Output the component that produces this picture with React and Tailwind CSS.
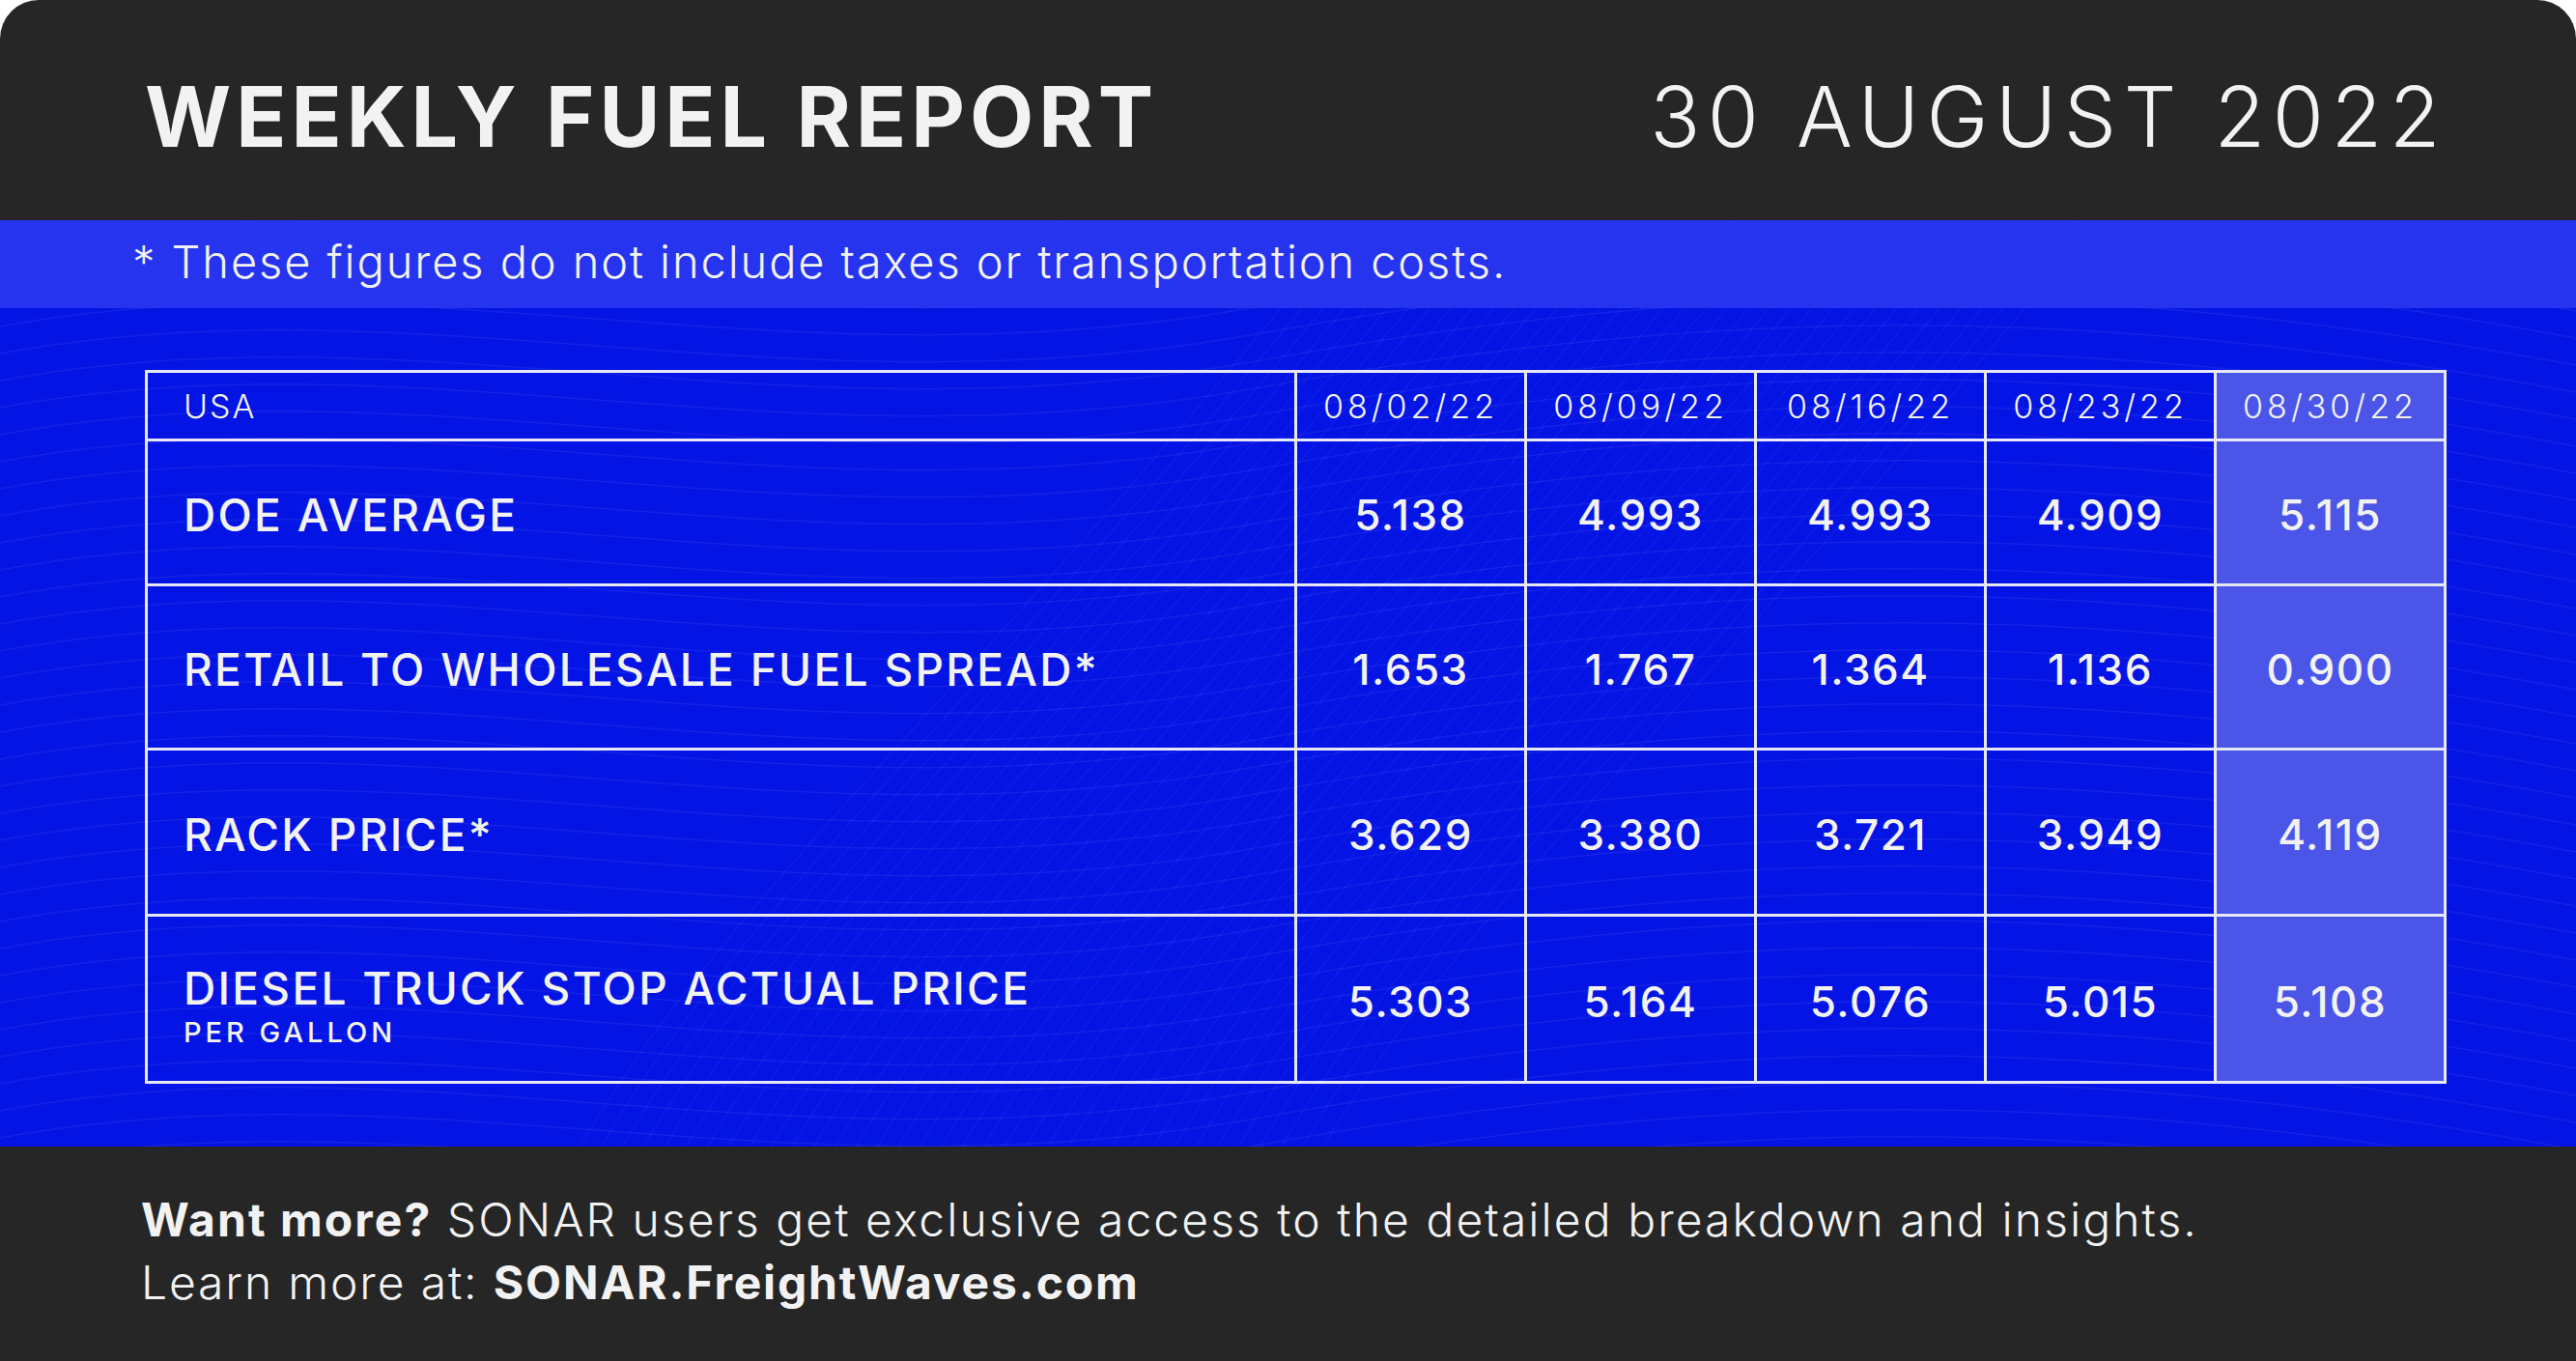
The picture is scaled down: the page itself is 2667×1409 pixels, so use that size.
import React from "react";

const cols = ["08/02/22", "08/09/22", "08/16/22", "08/23/22", "08/30/22"];
const rows = [
  { label: "DOE AVERAGE", vals: ["5.138", "4.993", "4.993", "4.909", "5.115"], h: "h-[150px]" },
  { label: "RETAIL TO WHOLESALE FUEL SPREAD*", vals: ["1.653", "1.767", "1.364", "1.136", "0.900"], h: "h-[170px]" },
  { label: "RACK PRICE*", vals: ["3.629", "3.380", "3.721", "3.949", "4.119"], h: "h-[172px]" },
  { label: "DIESEL TRUCK STOP ACTUAL PRICE", sub: "PER GALLON", vals: ["5.303", "5.164", "5.076", "5.015", "5.108"], h: "h-[173px]" },
];

function Waves() {
  const lines = [];
  for (let i = 0; i < 40; i++) {
    const y = -80 + i * 28;
    lines.push(
      <path
        key={"a" + i}
        d={`M -50 ${y + 60} C 400 ${y - 40}, 800 ${y + 120}, 1300 ${y + 30} S 2200 ${y - 60}, 2750 ${y + 50}`}
        fill="none"
        stroke="#ffffff"
        strokeOpacity="0.065"
        strokeWidth="1.5"
      />
    );
  }
  for (let i = 0; i < 36; i++) {
    const x = 900 + i * 22;
    lines.push(
      <path
        key={"b" + i}
        d={`M ${x - 300} 960 C ${x - 150} 700, ${x + 100} 500, ${x + 500} 0`}
        fill="none"
        stroke="#ffffff"
        strokeOpacity="0.045"
        strokeWidth="1.5"
      />
    );
  }
  return (
    <svg className="absolute inset-0 w-full h-full" viewBox="0 0 2667 959" preserveAspectRatio="none">
      {lines}
    </svg>
  );
}

export default function App() {
  const font = { fontFamily: "Inter, 'Noto Sans', sans-serif" };
  return (
    <div className="w-[2667px] h-[1409px] bg-white" style={font}>
      <div className="w-full h-full rounded-t-[40px] overflow-hidden bg-[#262626] flex flex-col text-[#f2f2f2]">
        <header className="h-[228px] flex items-center justify-between pl-[150px] pr-[140px] pt-[14px]">
          <h1 className="text-[86px] font-bold leading-none tracking-[5px]">WEEKLY FUEL REPORT</h1>
          <div className="text-[86px] font-light leading-none tracking-[7.5px] -mr-[7px]">30 AUGUST 2022</div>
        </header>

        <section className="relative h-[959px] bg-[#0414e4]">
          <Waves />
          <div className="relative">
            <div className="h-[91px] bg-[#2a37ef]/90 flex items-center pl-[137px] pb-[6px]">
              <p className="text-[47px] font-light leading-none tracking-[1.9px]">* These figures do not include taxes or transportation costs.</p>
            </div>
            <div className="pl-[150px] pt-[64px]">
              <table className="border-collapse border-[3px] border-[#e6e8f8] table-fixed w-[2380px]">
                <colgroup>
                  <col className="w-[1190px]" />
                  <col className="w-[238px]" />
                  <col className="w-[238px]" />
                  <col className="w-[238px]" />
                  <col className="w-[238px]" />
                  <col className="w-[238px]" />
                </colgroup>
                <thead>
                  <tr className="h-[71px]">
                    <th className="border-[3px] border-[#e6e8f8] text-left pl-[37px] text-[34px] font-light tracking-[2px]">USA</th>
                    {cols.map((c, i) => (
                      <th
                        key={c}
                        className={
                          "border-[3px] border-[#e6e8f8] text-center text-[34px] font-light tracking-[4px] " +
                          (i === 4 ? "bg-[#4b56e9]" : "")
                        }
                      >
                        {c}
                      </th>
                    ))}
                  </tr>
                </thead>
                <tbody>
                  {rows.map((r) => (
                    <tr key={r.label} className={r.h}>
                      <td className="border-[3px] border-[#e6e8f8] pl-[37px] pt-[5px] align-middle">
                        <div className={"text-[46px] font-medium leading-none tracking-[2.3px] " + (r.sub ? "pt-[10px]" : "")}>{r.label}</div>
                        {r.sub && <div className="text-[29px] font-medium leading-none mt-[8px] tracking-[4px]">{r.sub}</div>}
                      </td>
                      {r.vals.map((v, i) => (
                        <td
                          key={i}
                          className={
                            "border-[3px] border-[#e6e8f8] text-center pt-[5px] text-[44px] font-medium tracking-[1.5px] " +
                            (i === 4 ? "bg-[#4b56e9]" : "")
                          }
                        >
                          {v}
                        </td>
                      ))}
                    </tr>
                  ))}
                </tbody>
              </table>
            </div>
          </div>
        </section>

        <footer className="flex-1 flex flex-col justify-center pl-[146px] pb-[6px] gap-[17px]">
          <p className="text-[48px] font-light leading-none tracking-[2.05px]">
            <span className="font-bold">Want more?</span> SONAR users get exclusive access to the detailed breakdown and insights.
          </p>
          <p className="text-[48px] font-light leading-none tracking-[1.85px]">
            Learn more at: <span className="font-bold">SONAR.FreightWaves.com</span>
          </p>
        </footer>
      </div>
    </div>
  );
}
